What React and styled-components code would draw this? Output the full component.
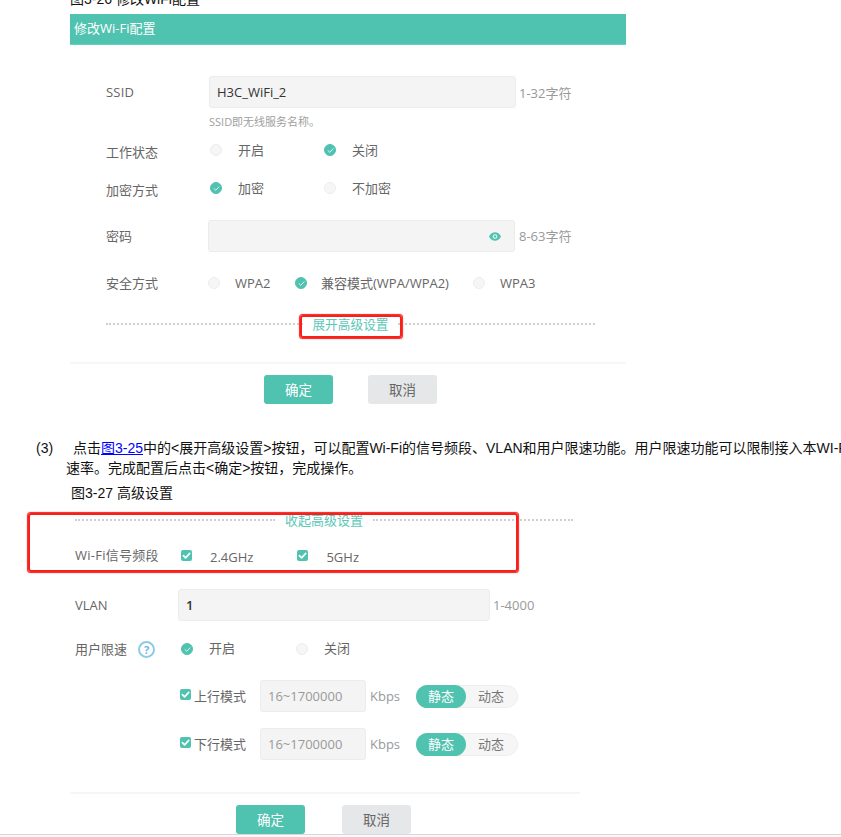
import React from "react";
import styled, { createGlobalStyle } from "styled-components";

const TEAL = "#50c2b0";
const UI_FONT = `"Open Sans", "Noto Sans CJK SC", sans-serif`;
const DOC_FONT = `"Liberation Sans", "Noto Sans CJK SC", sans-serif`;

const Global = createGlobalStyle`
  html, body { margin: 0; padding: 0; background: #fff; overflow: hidden; }
  * { box-sizing: border-box; }
`;

const Page = styled.div`
  position: relative;
  width: 841px;
  height: 837px;
  overflow: hidden;
  background: #fff;
  font-family: ${UI_FONT};
  font-size: 13px;
  color: #666;
`;

const Clip = styled.div`
  margin-top: -8px;
`;

const DocCaption = styled.div`
  font-family: ${DOC_FONT};
  font-size: 14px;
  line-height: ${(p) => p.$line || 20}px;
  height: ${(p) => p.$h || 20}px;
  margin-left: ${(p) => p.$left}px;
  margin-top: ${(p) => p.$mt || 0}px;
  color: #111;
  white-space: nowrap;
`;

const Panel = styled.section`
  width: ${(p) => p.$width}px;
  margin-left: 70px;
`;

const Header = styled.header`
  height: 31px;
  background: ${TEAL};
  border-bottom: 1px solid #62d0be;
  color: #fff;
  font-size: 13px;
  line-height: 29px;
  padding-left: 4px;
`;

const Form = styled.div`
  padding-left: ${(p) => p.$left}px;
`;

const Row = styled.div`
  display: flex;
  align-items: center;
  height: ${(p) => p.$h || 24}px;
  margin-top: ${(p) => p.$mt}px;
`;

const Label = styled.div`
  flex: none;
  width: ${(p) => p.$w}px;
  margin-top: ${(p) => p.$drop || 0}px;
  letter-spacing: ${(p) => p.$track || 0}px;
  color: #666;
  display: flex;
  align-items: center;
  white-space: nowrap;
`;

const Input = styled.div`
  flex: none;
  width: ${(p) => p.$w}px;
  height: 32px;
  background: #f4f4f4;
  border: 1px solid #ececec;
  border-radius: 3px;
  padding: 0 7px;
  display: flex;
  align-items: center;
  justify-content: space-between;
  font-size: 13px;
  color: ${(p) => (p.$muted ? "#999" : "#333")};
  font-weight: ${(p) => (p.$bold ? 600 : 400)};
`;

const Unit = styled.span`
  margin-left: ${(p) => p.$ml || 3}px;
  margin-bottom: ${(p) => p.$up || 0}px;
  color: #999;
  font-size: 13px;
  white-space: nowrap;
`;

const Hint = styled.div`
  height: 16px;
  margin-top: 6px;
  margin-left: 103px;
  font-size: 11px;
  line-height: 16px;
  color: #a0a0a0;
`;

const Option = styled.label`
  flex: none;
  display: flex;
  align-items: center;
  width: ${(p) => p.$w}px;
  margin-top: ${(p) => p.$lift || 0}px;
  color: #666;
  white-space: nowrap;
`;

const OptionText = styled.span`
  margin-left: ${(p) => p.$gap}px;
  margin-bottom: ${(p) => p.$up || 0}px;
  margin-top: ${(p) => p.$down || 0}px;
`;

const RadioDot = styled.span`
  flex: none;
  width: 12px;
  height: 12px;
  margin-left: ${(p) => p.$ml || 0}px;
  border-radius: 50%;
  background: ${(p) => (p.$on ? TEAL : "#f6f6f6")};
  border: 1px solid ${(p) => (p.$on ? TEAL : "#ededed")};
  display: inline-flex;
  align-items: center;
  justify-content: center;
`;

const Box = styled.span`
  flex: none;
  width: 11px;
  height: 11px;
  margin-left: ${(p) => p.$ml || 0}px;
  margin-top: ${(p) => p.$mt || 0}px;
  border-radius: 2px;
  background: ${TEAL};
  display: inline-flex;
  align-items: center;
  justify-content: center;
`;

const Tick = ({ size = 8, width = 1.4, color = "#fff" }) => (
  <svg width={size} height={size} viewBox="0 0 10 10" fill="none">
    <path d="M1.5 5.2 4 7.6 8.6 2.6" stroke={color} strokeWidth={width * 1.25} strokeLinecap="round" strokeLinejoin="round" />
  </svg>
);

const Radio = ({ on, ml }) => (
  <RadioDot $on={on} $ml={ml}>
    {on && <Tick size={7} width={1.1} color="rgba(255,255,255,0.85)" />}
  </RadioDot>
);

const Check = ({ ml, mt }) => (
  <Box $ml={ml} $mt={mt}>
    <Tick size={9} width={1.5} />
  </Box>
);

const EyeIcon = styled.svg`
  margin-right: 6px;
`;

const Eye = () => (
  <EyeIcon width="12" height="9" viewBox="0 0 12 9">
    <path d="M0 4.5C1.6 1.6 3.6.3 6 .3s4.4 1.3 6 4.2C10.4 7.4 8.4 8.7 6 8.7S1.6 7.4 0 4.5Z" fill={TEAL} />
    <circle cx="6" cy="4.5" r="2.3" fill="#f4f4f4" />
    <circle cx="6" cy="4.5" r="1.2" fill={TEAL} />
  </EyeIcon>
);

const HelpIcon = styled.span`
  width: 17px;
  height: 17px;
  margin-left: 11px;
  margin-top: 2px;
  border: 2px solid #8ccbe8;
  border-radius: 50%;
  color: #6bb9de;
  font-size: 11px;
  font-weight: 700;
  line-height: 13px;
  text-align: center;
`;

const Help = () => <HelpIcon>?</HelpIcon>;

const Divider = styled.div`
  display: flex;
  align-items: center;
  width: ${(p) => p.$w}px;
  height: 20px;
  margin-top: ${(p) => p.$mt}px;
  color: #5cc7b6;
  font-size: ${(p) => p.$size || 12.7}px;
  white-space: nowrap;
`;

const Dots = styled.span`
  flex: 1;
  border-top: 2px dotted #cfcfcf;
  height: 0;
`;

const DividerText = styled.span`
  flex: none;
  padding: 0 ${(p) => p.$pad}px;
  margin-bottom: 2px;
`;

const FooterLine = styled.div`
  height: 2px;
  margin-top: ${(p) => p.$mt}px;
  background: #f6f6f6;
`;

const Footer = styled.div`
  display: flex;
  margin-top: 11px;
  margin-left: ${(p) => p.$left}px;
  gap: ${(p) => p.$gap}px;
`;

const Button = styled.button`
  width: 69px;
  height: 29px;
  padding: 0 0 2px;
  border: 0;
  border-radius: 3px;
  background: ${(p) => (p.$primary ? TEAL : "#e6e7e9")};
  color: ${(p) => (p.$primary ? "#fff" : "#666")};
  font-family: ${UI_FONT};
  font-size: 13.5px;
`;

const Numbered = styled.div`
  display: flex;
  margin-top: 34px;
  margin-left: 36px;
  font-family: ${DOC_FONT};
  font-size: 14px;
  line-height: 20px;
  color: #111;
  white-space: nowrap;
`;

const Num = styled.span`
  flex: none;
  width: 30px;
`;

const Para = styled.p`
  margin: 0;
  text-indent: 7px;
`;

const DocLink = styled.a`
  color: #00f;
  text-decoration: underline;
`;

const Toggle = styled.div`
  flex: none;
  display: flex;
  width: 102px;
  height: 23px;
  margin-left: 16px;
  border: 1px solid #eee;
  border-radius: 12px;
  background: #f6f6f6;
  font-size: 13px;
  color: #777;
`;

const ToggleItem = styled.span`
  width: ${(p) => (p.$on ? 50 : 52)}px;
  margin: -1px 0 -1px -1px;
  border-radius: 12px;
  text-align: center;
  line-height: 23px;
  background: ${(p) => (p.$on ? TEAL : "transparent")};
  color: ${(p) => (p.$on ? "#fff" : "#777")};
`;

const RedBox = styled.div`
  position: absolute;
  left: ${(p) => p.$x}px;
  top: ${(p) => p.$y}px;
  width: ${(p) => p.$w}px;
  height: ${(p) => p.$h}px;
  border: 2px solid #f8201a;
  border-radius: 3px;
  box-shadow: 0 0 1px 0.5px #f8201a;
  pointer-events: none;
`;

const BottomEdge = styled.div`
  position: absolute;
  left: 0;
  right: 0;
  bottom: 0;
  height: 3px;
  background: #fafafa;
  border-top: 1px solid #d8d8d8;
`;

const LimitRow = ({ mt, name }) => (
  <Row $h={32} $mt={mt}>
    <Check ml={105} mt={-4} />
    <Label $w={69} $drop={-2}>
      <OptionText $gap={3}>{name}</OptionText>
    </Label>
    <Input $w={106} $muted>16~1700000</Input>
    <Unit $ml={4}>Kbps</Unit>
    <Toggle>
      <ToggleItem $on>静态</ToggleItem>
      <ToggleItem>动态</ToggleItem>
    </Toggle>
  </Row>
);

export default function App() {
  return (
    <Page>
      <Global />
      <Clip>
        <DocCaption $left={70} $h={22} $line={14}>图3-26 修改WiFi配置</DocCaption>
      </Clip>

      <Panel $width={556}>
        <Header>修改Wi-Fi配置</Header>
        <Form $left={36}>
          <Row $h={32} $mt={31}>
            <Label $w={103} $track={0.2}>SSID</Label>
            <Input $w={307}>H3C_WiFi_2</Input>
            <Unit>1-32字符</Unit>
          </Row>
          <Hint>SSID即无线服务名称。</Hint>
          <Row $mt={8}>
            <Label $w={104} $drop={2}>工作状态</Label>
            <Option $w={114}><Radio /><OptionText $gap={16} $up={2}>开启</OptionText></Option>
            <Option $w={90}><Radio on /><OptionText $gap={16} $up={2}>关闭</OptionText></Option>
          </Row>
          <Row $mt={14}>
            <Label $w={104} $drop={2}>加密方式</Label>
            <Option $w={114}><Radio on /><OptionText $gap={16} $up={2}>加密</OptionText></Option>
            <Option $w={90}><Radio /><OptionText $gap={16} $up={2}>不加密</OptionText></Option>
          </Row>
          <Row $h={32} $mt={20}>
            <Label $w={102} $drop={-2}>密码</Label>
            <Input $w={307}><span /><Eye /></Input>
            <Unit $ml={4} $up={2}>8-63字符</Unit>
          </Row>
          <Row $mt={19}>
            <Label $w={102} $drop={-2}>安全方式</Label>
            <Option $w={87}><Radio /><OptionText $gap={15}>WPA2</OptionText></Option>
            <Option $w={178}><Radio on /><OptionText $gap={14} $up={2}>兼容模式(WPA/WPA2)</OptionText></Option>
            <Option $w={70}><Radio /><OptionText $gap={15}>WPA3</OptionText></Option>
          </Row>
          <Divider $w={489} $mt={19}>
            <Dots />
            <DividerText $pad={9}>展开高级设置</DividerText>
            <Dots />
          </Divider>
        </Form>
        <FooterLine $mt={28} />
        <Footer $left={194} $gap={35}>
          <Button $primary>确定</Button>
          <Button>取消</Button>
        </Footer>
      </Panel>

      <Numbered>
        <Num>(3)</Num>
        <Para>
          点击<DocLink>图3-25</DocLink>中的&lt;展开高级设置&gt;按钮，可以配置Wi-Fi的信号频段、VLAN和用户限速功能。用户限速功能可以限制接入本WI-Fi网络的用户的上下行
          <br />
          速率。完成配置后点击&lt;确定&gt;按钮，完成操作。
        </Para>
      </Numbered>
      <DocCaption $left={71} $mt={5}>图3-27 高级设置</DocCaption>

      <Panel $width={510}>
        <Form $left={5}>
          <Divider $w={498} $mt={7} $size={13}>
            <Dots />
            <DividerText $pad={10}>收起高级设置</DividerText>
            <Dots />
          </Divider>
          <Row $mt={13}>
            <Label $w={106} $drop={-2} $track={0.25}>Wi-Fi信号频段</Label>
            <Check />
            <OptionText $gap={18} $down={4}>2.4GHz</OptionText>
            <Check ml={44} />
            <OptionText $gap={18} $down={4}>5GHz</OptionText>
          </Row>
          <Row $h={32} $mt={22}>
            <Label $w={103}>VLAN</Label>
            <Input $w={312} $bold>1</Input>
            <Unit>1-4000</Unit>
          </Row>
          <Row $mt={17}>
            <Label $w={106} $drop={-4}>用户限速<Help /></Label>
            <Option $w={115} $lift={-2}><Radio on /><OptionText $gap={16} $up={4}>开启</OptionText></Option>
            <Option $w={90} $lift={-2}><Radio /><OptionText $gap={16} $up={4}>关闭</OptionText></Option>
          </Row>
          <LimitRow mt={18} name="上行模式" />
          <LimitRow mt={16} name="下行模式" />
        </Form>
        <FooterLine $mt={32} />
        <Footer $left={166} $gap={37}>
          <Button $primary>确定</Button>
          <Button>取消</Button>
        </Footer>
      </Panel>

      <RedBox $x={300} $y={315} $w={102} $h={23} />
      <RedBox $x={28} $y={513} $w={490} $h={59} />
      <BottomEdge />
    </Page>
  );
}
